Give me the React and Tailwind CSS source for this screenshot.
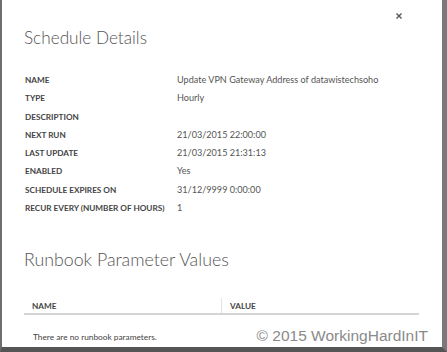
import React from 'react';

const rows = [
    ['NAME', 'Update VPN Gateway Address of datawistechsoho'],
    ['TYPE', 'Hourly'],
    ['DESCRIPTION', ''],
    ['NEXT RUN', '21/03/2015 22:00:00'],
    ['LAST UPDATE', '21/03/2015 21:31:13'],
    ['ENABLED', 'Yes'],
    ['SCHEDULE EXPIRES ON', '31/12/9999 0:00:00'],
    ['RECUR EVERY (NUMBER OF HOURS)', '1'],
];

const App = () => {
    return (
        <div
            className="relative w-[447px] h-[352px] bg-white border-l-2 border-l-[#6e6e6e] border-r-[5px] border-r-[#7a7a7a] border-b-[5px] border-b-[#555] overflow-hidden"
            style={{ fontFamily: 'Lato, "Open Sans", sans-serif' }}
        >
            {/* close */}
            <button className="absolute top-[13px] right-[40px] w-[6px] h-[6px]">
                <svg viewBox="0 0 6 6" className="w-[6px] h-[6px]">
                    <path d="M0.5 0.5 L5.5 5.5 M5.5 0.5 L0.5 5.5" stroke="#555" strokeWidth="1.4" />
                </svg>
            </button>

            <div className="pl-[22px] pr-[23px]">
                <h1 className="pt-[26px] text-[17.2px] leading-[24px] font-light text-[#555]">Schedule Details</h1>

                <div className="mt-[21px] grid grid-cols-[153px_1fr]">
                    {rows.map(([label, value]) => (
                        <React.Fragment key={label}>
                            <div className="h-[18.3px] leading-[18px] text-[8.2px] font-bold text-[#444] pl-[1px] whitespace-nowrap">{label}</div>
                            <div className="h-[18.3px] leading-[18px] text-[9.1px] text-[#555]">{value}</div>
                        </React.Fragment>
                    ))}
                </div>

                <h2 className="mt-[30px] text-[17.8px] leading-[24px] font-light text-[#555]">Runbook Parameter Values</h2>

                <div className="mt-[27px] flex h-[17px] border-b-2 border-b-[#d4d4d4]">
                    <div className="w-[198px] pl-[8px] text-[8.2px] font-bold text-[#444] leading-[16px] border-r border-r-[#e2e2e2]">NAME</div>
                    <div className="pl-[8px] text-[8.2px] font-bold text-[#444] leading-[16px]">VALUE</div>
                </div>

                <p className="mt-[17px] pl-[9px] text-[8.3px] leading-[10px] text-[#444]">There are no runbook parameters.</p>
            </div>

            <div
                className="absolute right-[14px] bottom-[4px] text-[15.5px] leading-none text-[#8a8a8a]"
                style={{ fontFamily: '"Liberation Sans", Arial, sans-serif' }}
            >
                © 2015 WorkingHardInIT
            </div>
        </div>
    );
};

export default App;
